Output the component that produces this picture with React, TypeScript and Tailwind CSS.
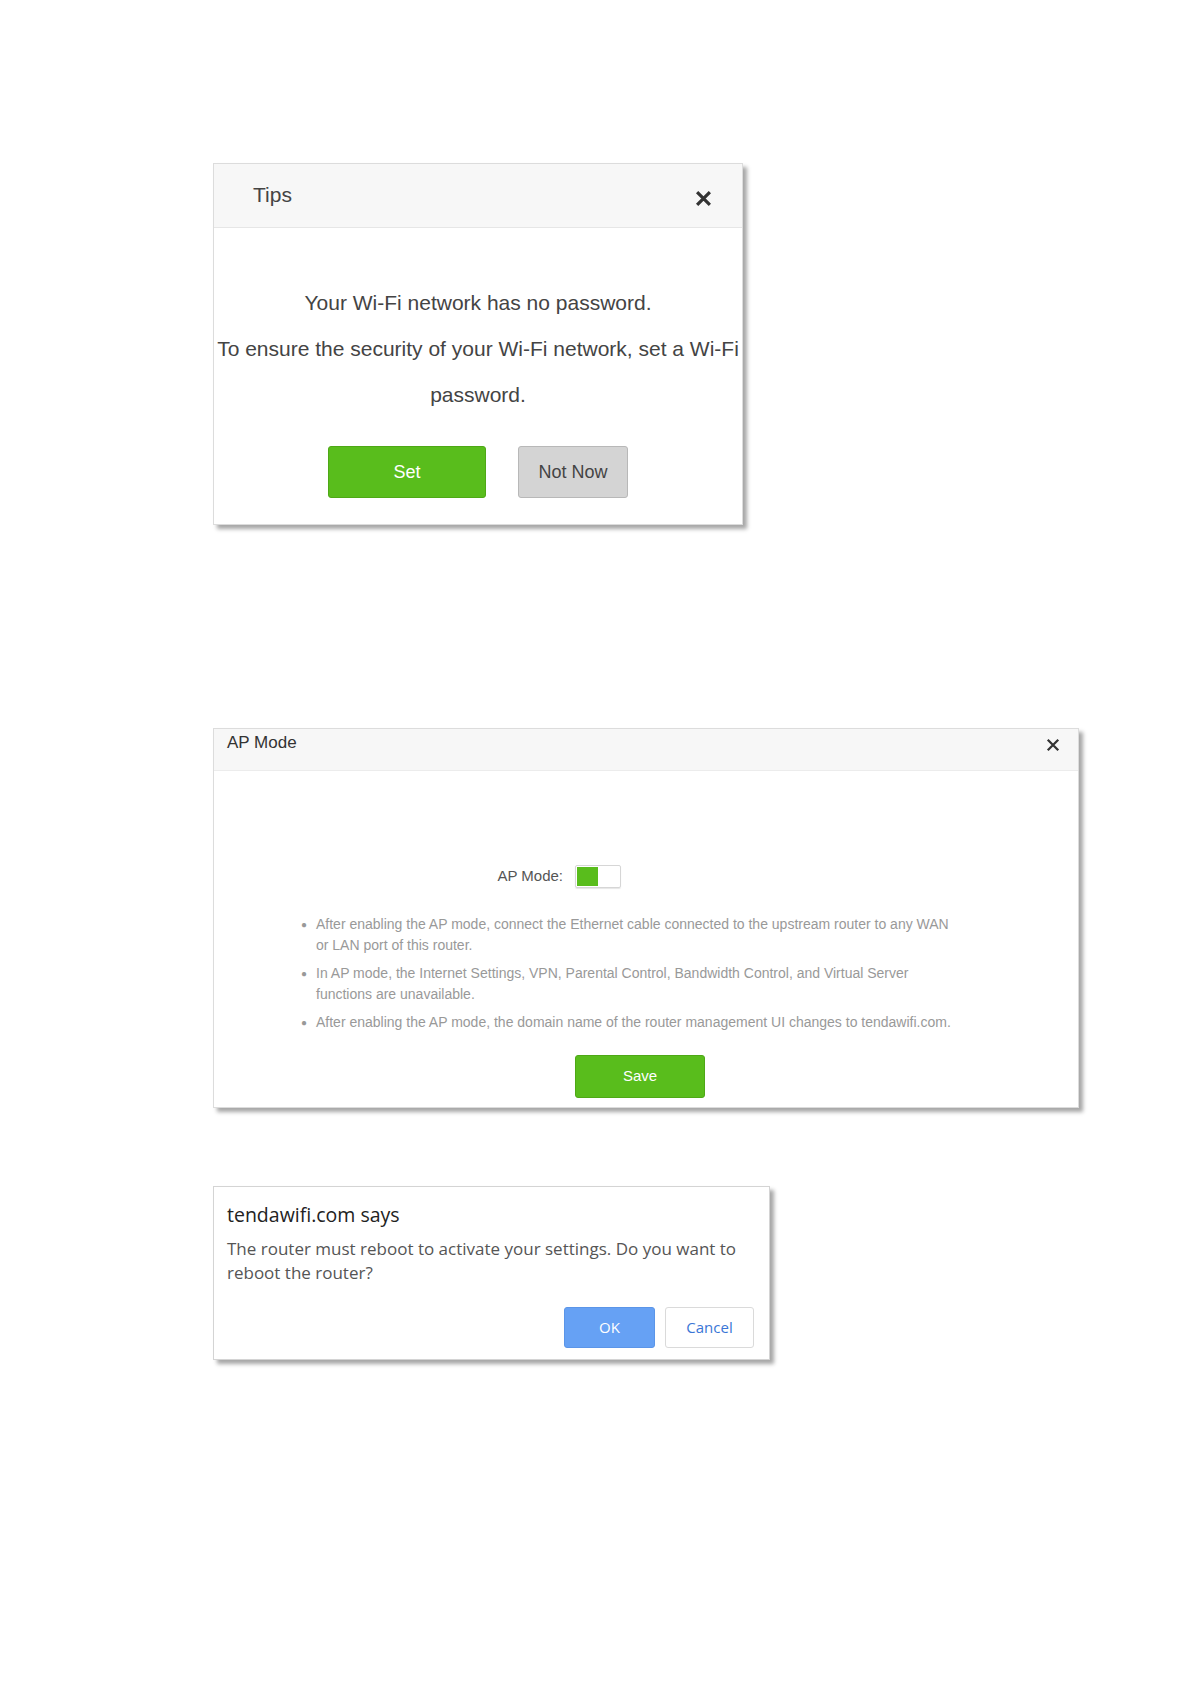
import React from 'react'

function CloseIcon({ size, stroke }: { size: number; stroke: number }) {
    return (
        <svg width={size} height={size} viewBox="0 0 16 16" fill="none">
            <path d="M2 2L14 14M14 2L2 14" stroke="#333" strokeWidth={stroke} strokeLinecap="butt" />
        </svg>
    )
}

function TipsDialog() {
    return (
        <div className="w-[530px] h-[362px] bg-white border border-[#dcdcdc] shadow-[4px_4px_4px_rgba(0,0,0,0.35)] flex flex-col">
            {/* Header */}
            <div className="h-[64px] bg-[#f7f7f7] border-b border-[#e6e6e6] flex items-center justify-between pl-[39px] pr-[30px] shrink-0">
                <span className="text-[21px] text-[#444] -mt-[2px]">Tips</span>
                <span className="mt-[5px]">
                    <CloseIcon size={17} stroke={3} />
                </span>
            </div>

            {/* Body */}
            <div className="flex-1 flex flex-col items-center pt-[52px]">
                <p className="text-[21px] leading-[46px] text-[#444] text-center">
                    Your Wi-Fi network has no password.
                    <br />
                    To ensure the security of your Wi-Fi network, set a Wi-Fi password.
                </p>
                <div className="flex gap-[32px] mt-[28px]">
                    <button className="w-[158px] h-[52px] rounded-[3px] bg-[#59bd1c] border border-[#4ea816] text-white text-[18px]">
                        Set
                    </button>
                    <button className="w-[110px] h-[52px] rounded-[3px] bg-[#d4d4d4] border border-[#b8b8b8] text-[#444] text-[18px]">
                        Not Now
                    </button>
                </div>
            </div>
        </div>
    )
}

const notes = [
    'After enabling the AP mode, connect the Ethernet cable connected to the upstream router to any WAN or LAN port of this router.',
    'In AP mode, the Internet Settings, VPN, Parental Control, Bandwidth Control, and Virtual Server functions are unavailable.',
    'After enabling the AP mode, the domain name of the router management UI changes to tendawifi.com.',
]

function ApModeDialog() {
    return (
        <div className="w-[866px] h-[380px] bg-white border border-[#dcdcdc] shadow-[4px_4px_4px_rgba(0,0,0,0.35)] flex flex-col">
            {/* Header */}
            <div className="h-[42px] bg-[#f7f7f7] border-b border-[#ececec] flex justify-between pl-[13px] pr-[18px] pt-[4px] shrink-0">
                <span className="text-[17px] leading-[20px] text-[#333]">AP Mode</span>
                <span className="mt-[5px]">
                    <CloseIcon size={14} stroke={2.6} />
                </span>
            </div>

            {/* Body */}
            <div className="flex-1 flex flex-col pt-[94px]">
                <div className="flex items-center">
                    <span className="w-[349px] text-right text-[15px] text-[#555]">AP Mode:</span>
                    <div className="ml-[12px] w-[46px] h-[23px] border border-[#d6d6d6] rounded-[2px] flex p-[1px] shadow-[0_1px_1px_rgba(0,0,0,0.1)]">
                        <div className="w-[21px] h-full bg-[#59bd1c]" />
                        <div className="flex-1 h-full bg-white" />
                    </div>
                </div>

                <ul className="mt-[26px] pl-[87px] flex flex-col gap-[7px]">
                    {notes.map((note) => (
                        <li key={note} className="flex text-[14px] leading-[21px] text-[#999]">
                            <span className="w-[15px] shrink-0 text-[10px]">●</span>
                            <span className="w-[642px]">{note}</span>
                        </li>
                    ))}
                </ul>

                <div className="flex justify-center mt-[22px] pr-[12px]">
                    <button className="w-[130px] h-[43px] rounded-[3px] bg-[#59bd1c] border border-[#4ea816] text-white text-[15px]">
                        Save
                    </button>
                </div>
            </div>
        </div>
    )
}

function RebootDialog() {
    return (
        <div className="w-[557px] h-[174px] bg-white border border-[#d4d4d4] shadow-[4px_4px_4px_rgba(0,0,0,0.35)] flex flex-col px-[13px] pt-[14px] font-['Open_Sans',sans-serif]">
            <h2 className="text-[19.5px] leading-[28px] text-[#222]">tendawifi.com says</h2>
            <p className="mt-[8px] text-[17px] leading-[24px] text-[#555]">
                The router must reboot to activate your settings. Do you want to reboot the router?
            </p>
            <div className="flex justify-end gap-[10px] mt-[22px] pr-[2px]">
                <button className="w-[91px] h-[41px] rounded-[3px] bg-[#66a1f4] border border-[#5b95e8] text-white text-[15px]">
                    OK
                </button>
                <button className="w-[89px] h-[41px] rounded-[3px] bg-white border border-[#dadada] text-[#3a76d6] text-[15px]">
                    Cancel
                </button>
            </div>
        </div>
    )
}

export default function App() {
    return (
        <div className="w-[1191px] min-h-[1684px] bg-white pl-[213px] pt-[163px] font-['Liberation_Sans',Arial,sans-serif]">
            <TipsDialog />
            <div className="mt-[203px]">
                <ApModeDialog />
            </div>
            <div className="mt-[78px]">
                <RebootDialog />
            </div>
        </div>
    )
}
